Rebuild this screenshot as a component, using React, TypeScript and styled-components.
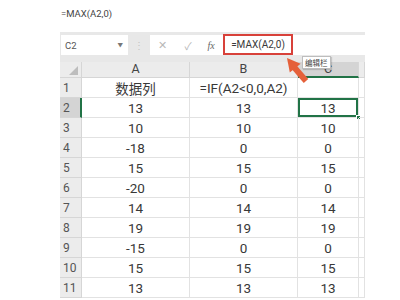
import React from "react";
import styled, { createGlobalStyle } from "styled-components";

const Global = createGlobalStyle`
  html, body { margin: 0; padding: 0; background: #ffffff; }
  body { font-family: Roboto, "Noto Sans CJK SC", sans-serif; }
`;

const Page = styled.div`
  position: relative;
  width: 400px;
  height: 300px;
  overflow: hidden;
  padding-left: 60px;
  box-sizing: border-box;
  display: flex;
  flex-direction: column;
`;

const TopText = styled.div`
  height: 32px;
  display: flex;
  align-items: center;
  padding-left: 1px;
  padding-bottom: 6px;
  box-sizing: border-box;
  font-size: 9.5px;
  color: #444;
`;

const Toolbar = styled.div`
  width: 305px;
  height: 30px;
  background: #e8e8e8;
  display: flex;
  align-items: flex-start;
  padding: 3px 0 0 1px;
  box-sizing: border-box;
`;

const NameBox = styled.div`
  width: 67px;
  height: 20px;
  background: #fff;
  display: flex;
  align-items: center;
  justify-content: space-between;
  padding: 0 5px 0 4px;
  box-sizing: border-box;
  font-size: 9.5px;
  color: #555;
`;

const Caret = styled.span`
  font-size: 5.5px;
  color: #777;
`;

const Dots = styled.div`
  width: 22px;
  height: 20px;
  display: flex;
  align-items: center;
  justify-content: center;
  color: #c4c4c4;
  font-size: 10px;
`;

const FormulaArea = styled.div`
  flex: 1;
  height: 20px;
  background: #fff;
  display: flex;
  align-items: center;
`;

const Icon = styled.span<{ $w: number }>`
  width: ${(p) => p.$w}px;
  display: flex;
  justify-content: center;
  align-items: center;
  color: #b8b8b8;
  font-size: 10.5px;
`;

const Fx = styled.span`
  width: 18px;
  display: flex;
  justify-content: center;
  font-family: "Liberation Serif", serif;
  font-style: italic;
  font-size: 10px;
  color: #666;
`;

const FormulaBox = styled.div`
  margin-left: 3px;
  margin-top: -1px;
  width: 70px;
  height: 21px;
  border: 2px solid #d8413a;
  box-sizing: border-box;
  display: flex;
  align-items: center;
  justify-content: center;
  font-size: 10px;
  color: #3a3a3a;
`;

const Sheet = styled.div`
  display: grid;
  grid-template-columns: 22px 108px 108px 61px 6px;
  grid-auto-rows: 20px;
  grid-template-rows: 16px;
  width: 305px;
`;

const Corner = styled.div`
  background: #ececec;
  border-right: 1px solid #d6d6d6;
  border-bottom: 1px solid #d6d6d6;
  box-sizing: border-box;
  display: flex;
  justify-content: flex-end;
  align-items: flex-end;
  padding: 0 3px 2px 0;
`;

const ColHead = styled.div<{ $active?: boolean }>`
  background: ${(p) => (p.$active ? "#d4d4d4" : "#ececec")};
  border-right: 1px solid #d6d6d6;
  border-bottom: ${(p) => (p.$active ? "2px solid #217346" : "1px solid #d6d6d6")};
  box-sizing: border-box;
  display: flex;
  align-items: center;
  justify-content: center;
  font-size: 12.5px;
  color: #444;
  line-height: 1;
`;

const RowHead = styled.div<{ $active?: boolean }>`
  background: ${(p) => (p.$active ? "#d4d4d4" : "#ececec")};
  border-right: ${(p) => (p.$active ? "2px solid #217346" : "1px solid #d6d6d6")};
  border-bottom: 1px solid #d6d6d6;
  box-sizing: border-box;
  display: flex;
  align-items: center;
  padding-left: 3px;
  font-size: 12px;
  color: #555;
`;

const Cell = styled.div<{ $selected?: boolean }>`
  position: relative;
  border-right: 1px solid #e2e2e2;
  border-bottom: 1px solid #e2e2e2;
  box-sizing: border-box;
  display: flex;
  align-items: center;
  justify-content: center;
  font-size: 13.5px;
  color: #383838;
  white-space: nowrap;
  box-shadow: ${(p) => (p.$selected ? "inset 0 0 0 2px #217346" : "none")};
  &::after {
    content: "";
    display: ${(p) => (p.$selected ? "block" : "none")};
    position: absolute;
    right: -3px;
    bottom: -3px;
    width: 5px;
    height: 5px;
    background: #217346;
    border: 1px solid #fff;
    box-sizing: border-box;
  }
`;

const Tooltip = styled.div`
  position: absolute;
  left: 302px;
  top: 56px;
  height: 11px;
  padding: 0 2px;
  background: #fff;
  border: 1px solid #bdbdbd;
  box-shadow: 1px 1px 1px rgba(0, 0, 0, 0.15);
  font-size: 7.5px;
  line-height: 11px;
  color: #444;
  font-family: "Noto Sans CJK SC", sans-serif;
`;

const ArrowWrap = styled.svg`
  position: absolute;
  left: 280px;
  top: 52px;
`;

const rows: string[][] = [
  ["数据列", "=IF(A2<0,0,A2)", ""],
  ["13", "13", "13"],
  ["10", "10", "10"],
  ["-18", "0", "0"],
  ["15", "15", "15"],
  ["-20", "0", "0"],
  ["14", "14", "14"],
  ["19", "19", "19"],
  ["-15", "0", "0"],
  ["15", "15", "15"],
  ["13", "13", "13"],
];

export default function App() {
  return (
    <>
      <Global />
      <Page>
        <TopText>=MAX(A2,0)</TopText>
        <Toolbar>
          <NameBox>
            <span>C2</span>
            <Caret>▼</Caret>
          </NameBox>
          <Dots>⋮</Dots>
          <FormulaArea>
            <Icon $w={24}>✕</Icon>
            <Icon $w={28}>✓</Icon>
            <Fx>fx</Fx>
            <FormulaBox>=MAX(A2,0)</FormulaBox>
          </FormulaArea>
        </Toolbar>
        <Sheet>
          <Corner>
            <svg width="9" height="9" viewBox="0 0 9 9">
              <polygon points="9,0 9,9 0,9" fill="#bdbdbd" />
            </svg>
          </Corner>
          <ColHead>A</ColHead>
          <ColHead>B</ColHead>
          <ColHead $active>C</ColHead>
          <ColHead />
          {rows.map((r, i) => (
            <React.Fragment key={i}>
              <RowHead $active={i === 1}>{i + 1}</RowHead>
              <Cell>{r[0]}</Cell>
              <Cell>{r[1]}</Cell>
              <Cell $selected={i === 1}>{r[2]}</Cell>
              <Cell />
            </React.Fragment>
          ))}
        </Sheet>
        <ArrowWrap width="34" height="34" viewBox="0 0 34 34">
          <line x1="13.5" y1="14.5" x2="26" y2="29" stroke="#e5603a" strokeWidth="6" strokeLinecap="butt" />
          <polygon points="7,6 20.6,11.7 9.8,20.5" fill="#e5603a" />
        </ArrowWrap>
        <Tooltip>编辑栏</Tooltip>
      </Page>
    </>
  );
}
